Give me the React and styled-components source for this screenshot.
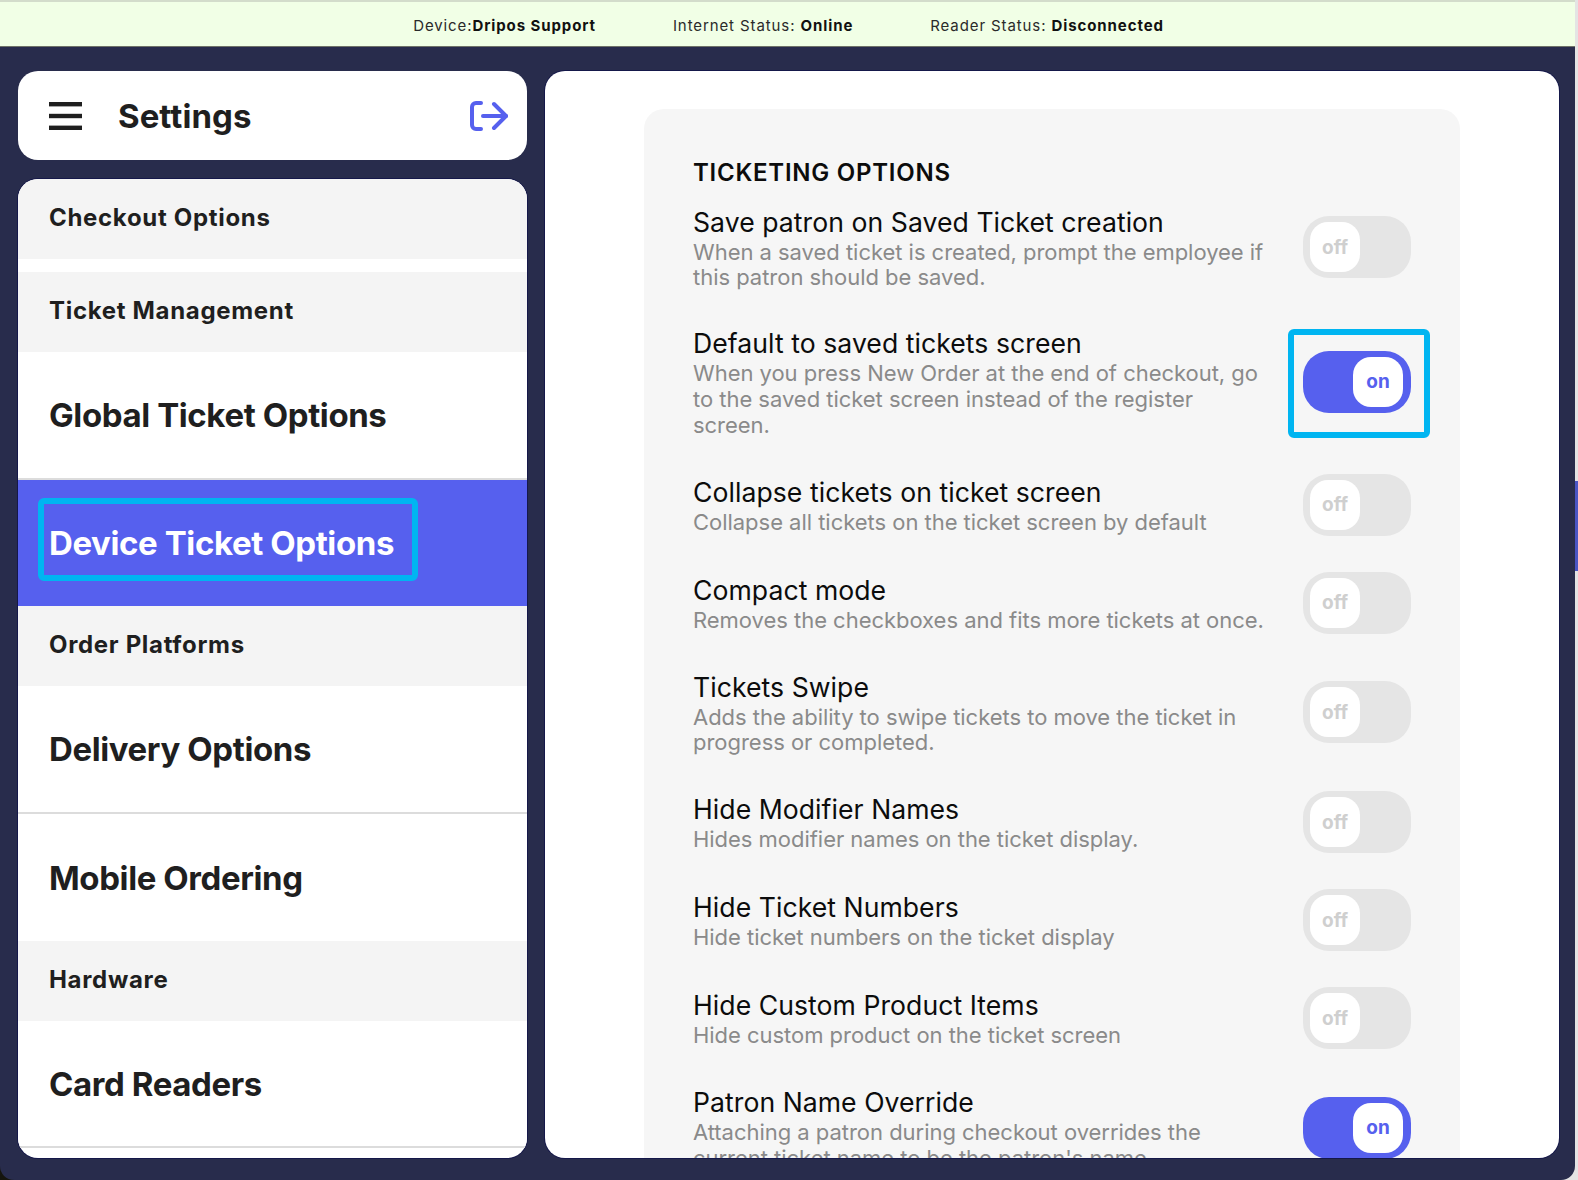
import React from "react";
import styled, { createGlobalStyle } from "styled-components";

const GlobalStyle = createGlobalStyle`
html, body {
    margin: 0;
    padding: 0;
    height: 100%;
    overflow: hidden;
    background: linear-gradient(to right, #15150d 0 50%, #e4e4e4 50%);
}
#root {
    height: 100%;
}
* {
    box-sizing: border-box;
}
`;

const NAV_ITEMS = [
    { name: "Checkout Options", kind: "compact", height: 80, spaced: true },
    { name: "Ticket Management", kind: "compact", height: 80 },
    { name: "Global Ticket Options", kind: "large", height: 128, ruled: true },
    { name: "Device Ticket Options", kind: "active", height: 126 },
    { name: "Order Platforms", kind: "compact", height: 80 },
    { name: "Delivery Options", kind: "large", height: 128, ruled: true },
    { name: "Mobile Ordering", kind: "large", height: 127 },
    { name: "Hardware", kind: "compact", height: 80 },
    { name: "Card Readers", kind: "large", height: 127, ruled: true },
];

const OPTIONS = [
    {
        label: "Save patron on Saved Ticket creation",
        text: "When a saved ticket is created, prompt the employee if this patron should be saved.",
    },
    {
        label: "Default to saved tickets screen",
        text: "When you press New Order at the end of checkout, go to the saved ticket screen instead of the register screen.",
        on: true,
        marked: true,
    },
    {
        label: "Collapse tickets on ticket screen",
        text: "Collapse all tickets on the ticket screen by default",
    },
    {
        label: "Compact mode",
        text: "Removes the checkboxes and fits more tickets at once.",
    },
    {
        label: "Tickets Swipe",
        text: "Adds the ability to swipe tickets to move the ticket in progress or completed.",
    },
    {
        label: "Hide Modifier Names",
        text: "Hides modifier names on the ticket display.",
    },
    {
        label: "Hide Ticket Numbers",
        text: "Hide ticket numbers on the ticket display",
    },
    {
        label: "Hide Custom Product Items",
        text: "Hide custom product on the ticket screen",
    },
    {
        label: "Patron Name Override",
        text: "Attaching a patron during checkout overrides the current ticket name to be the patron's name.",
        on: true,
    },
];

const Toggle = ({ on, marked }) => (
    <ToggleTrack $on={on} $marked={marked}>
        <ToggleKnob $on={on}>{on ? "on" : "off"}</ToggleKnob>
    </ToggleTrack>
);

const OptionRow = ({ label, text, on, marked }) => (
    <Option>
        <OptionText>
            <OptionLabel>{label}</OptionLabel>
            <OptionHint>{text}</OptionHint>
        </OptionText>
        <Toggle on={on} marked={marked} />
    </Option>
);

const App = () => {
    return (
        <>
            <GlobalStyle />
            <BehindSliver />
            <Window>
                <StatusBar>
                    <StatusItem>Device:<b>Dripos Support</b></StatusItem>
                    <StatusItem>Internet Status: <b>Online</b></StatusItem>
                    <StatusItem>Reader Status: <b>Disconnected</b></StatusItem>
                </StatusBar>
                <Columns>
                    <Sidebar>
                        <SidebarHeader>
                            <svg width="33" height="28" viewBox="0 0 33 28" fill="#1f1f1f">
                                <rect x="0" y="0" width="33" height="4.4" />
                                <rect x="0" y="11.8" width="33" height="4.4" />
                                <rect x="0" y="23.6" width="33" height="4.4" />
                            </svg>
                            <HeaderTitle>Settings</HeaderTitle>
                            <svg width="38" height="30" viewBox="0 0 38 30" fill="none" stroke="#5660ee" strokeWidth="4" strokeLinecap="round" strokeLinejoin="round">
                                <path d="M11 2H6a4 4 0 0 0-4 4v18a4 4 0 0 0 4 4h5" />
                                <path d="M13 15h23" />
                                <path d="M24 3l12 12-12 12" />
                            </svg>
                        </SidebarHeader>
                        <NavList>
                            {NAV_ITEMS.map((item) => (
                                <NavRow
                                    key={item.name}
                                    $kind={item.kind}
                                    $height={item.height}
                                    $spaced={item.spaced}
                                    $ruled={item.ruled}
                                >
                                    {item.name}
                                </NavRow>
                            ))}
                        </NavList>
                    </Sidebar>
                    <Panel>
                        <Card>
                            <CardTitle>TICKETING OPTIONS</CardTitle>
                            {OPTIONS.map((option) => (
                                <OptionRow key={option.label} {...option} />
                            ))}
                        </Card>
                    </Panel>
                </Columns>
            </Window>
        </>
    );
};

const BehindSliver = styled.div`
position: absolute;
right: 0;
top: 481px;
width: 3px;
height: 90px;
background: #4a55c4;`;

const Window = styled.div`
display: flex;
flex-direction: column;
width: 1575px;
height: 1180px;
background: #282c4c;
border-radius: 0 0 14px 14px;
overflow: hidden;
font-family: Inter, "Liberation Sans", sans-serif;`;

const StatusBar = styled.div`
display: flex;
justify-content: center;
align-items: center;
gap: 77px;
flex: none;
height: 47px;
padding: 2px 0 0 2px;
background: #f1ffe6;
border-top: 2px solid #d3dccb;
border-bottom: 1px solid #6e7268;`;

const StatusItem = styled.span`
font-size: 15px;
letter-spacing: 0.9px;
color: #2a2a2a;

b {
    font-weight: 700;
    color: #111;
}`;

const Columns = styled.div`
display: flex;
gap: 18px;
flex: 1;
min-height: 0;
padding: 24px 16px 22px 18px;`;

const Sidebar = styled.div`
display: flex;
flex-direction: column;
gap: 19px;
flex: none;
width: 509px;`;

const SidebarHeader = styled.div`
display: flex;
align-items: center;
flex: none;
height: 89px;
padding: 0 19px 0 31px;
background: #fff;
border-radius: 20px;`;

const HeaderTitle = styled.h1`
flex: 1;
margin: 0 0 0 36px;
font-size: 33px;
font-weight: 700;
letter-spacing: 0.05px;
color: #1f1f1f;`;

const NavList = styled.div`
flex: 1;
min-height: 0;
background: #fff;
border-radius: 20px;
overflow: hidden;
box-shadow: 0 0 0 1px #15184a;`;

const NavRow = styled.div`
position: relative;
display: flex;
align-items: center;
padding: 0 0 ${(p) => (p.$kind === "compact" ? "4px" : "0")} 31px;
height: ${(p) => p.$height}px;
margin-bottom: ${(p) => (p.$spaced ? "13px" : "0")};
background: ${(p) => (p.$kind === "compact" ? "#f4f4f4" : p.$kind === "active" ? "#5660ee" : "#fff")};
color: ${(p) => (p.$kind === "active" ? "#fff" : "#1f1f1f")};
font-size: ${(p) => (p.$kind === "compact" ? "24px" : "33px")};
font-weight: 700;
letter-spacing: ${(p) => (p.$kind === "compact" ? "0.68px" : "-0.4px")};
border-bottom: ${(p) => (p.$ruled ? "2px solid #dcdcdc" : "none")};

${(p) => p.$kind === "active" && `
&::after {
    content: "";
    box-sizing: border-box;
    position: absolute;
    left: 20px;
    top: 18px;
    width: 380px;
    height: 83px;
    border: 6px solid #00b5f1;
    border-radius: 6px;
}`}`;

const Panel = styled.div`
flex: 1;
min-width: 0;
padding: 38px 99px 0 99px;
background: #fff;
border-radius: 20px;
overflow: hidden;
box-shadow: 0 0 0 1px #15184a;`;

const Card = styled.div`
padding: 48px 49px 40px;
background: #f6f6f6;
border-radius: 20px;`;

const CardTitle = styled.h2`
margin: 0 0 15.6px;
font-size: 24px;
line-height: 32px;
font-weight: 600;
letter-spacing: 0.75px;
color: #0c0c0c;`;

const Option = styled.div`
display: flex;
align-items: center;
justify-content: space-between;
margin-bottom: 36px;`;

const OptionText = styled.div`
width: 580px;`;

const OptionLabel = styled.div`
font-size: 26.6px;
line-height: 34px;
letter-spacing: 0.05px;
color: #0c0c0c;`;

const OptionHint = styled.div`
margin: 1px 0 -1px;
font-size: 22px;
line-height: 25.8px;
letter-spacing: -0.03px;
color: #8a8a8a;`;

const ToggleTrack = styled.div`
position: relative;
display: flex;
align-items: center;
justify-content: ${(p) => (p.$on ? "flex-end" : "flex-start")};
flex: none;
width: 108px;
height: 62px;
padding: 0 ${(p) => (p.$on ? "8px" : "7px")};
background: ${(p) => (p.$on ? "#5660ee" : "#e5e5e5")};
border-radius: 26px;

${(p) => p.$marked && `
&::after {
    content: "";
    position: absolute;
    left: -15px;
    right: -19px;
    top: -22px;
    bottom: -25px;
    border: 6px solid #00b5f1;
    border-radius: 6px;
}`}`;

const ToggleKnob = styled.div`
display: flex;
align-items: center;
justify-content: center;
width: 50px;
height: 50px;
background: #fff;
border-radius: 18px;
font-size: 19px;
font-weight: 700;
color: ${(p) => (p.$on ? "#5660ee" : "#cfcfcf")};`;

export default App;
